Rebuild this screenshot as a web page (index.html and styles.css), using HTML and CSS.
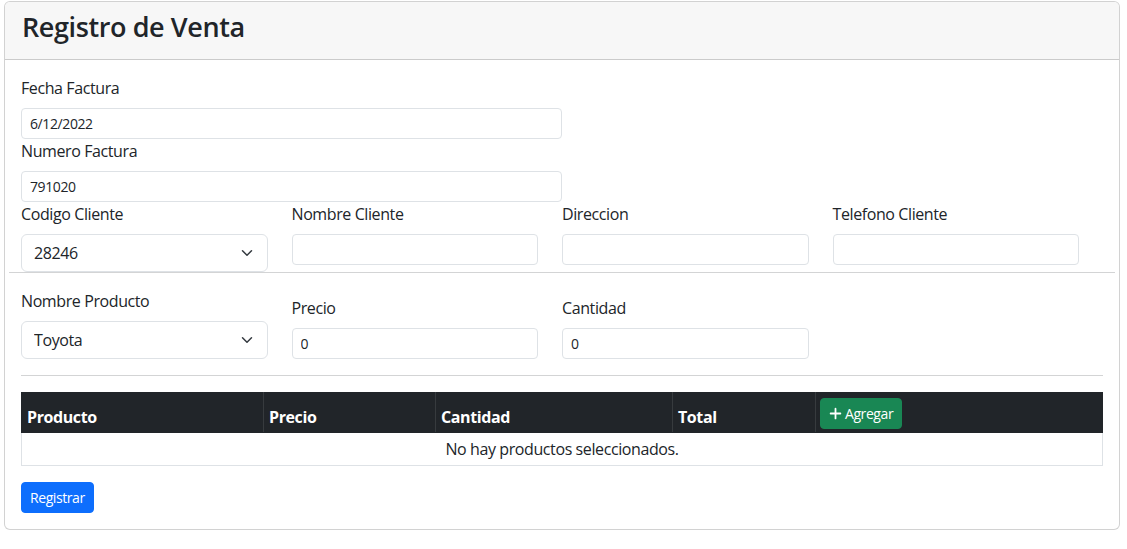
FILE: index.html
```html
<!DOCTYPE html>
<html lang="es">
<head>
<meta charset="utf-8">
<title>Registro de Venta</title>
<link rel="stylesheet" href="styles.css">
</head>
<body>
<div class="page">
  <div class="card">
    <div class="card-header">
      <h3 class="title">Registro de Venta</h3>
    </div>
    <div class="card-body">
      <div class="field half">
        <label class="label">Fecha Factura</label>
        <input class="input input-sm" type="text" value="6/12/2022">
      </div>
      <div class="field half">
        <label class="label">Numero Factura</label>
        <input class="input input-sm" type="text" value="791020">
      </div>

      <div class="grid">
        <div class="col">
          <label class="label">Codigo Cliente</label>
          <div class="select-wrap">
            <select class="select"><option>28246</option></select>
            <svg class="chevron" viewBox="0 0 16 16" width="16" height="12"><path d="m2 5 6 6 6-6" fill="none" stroke="#343a40" stroke-width="2" stroke-linecap="round" stroke-linejoin="round"/></svg>
          </div>
        </div>
        <div class="col">
          <label class="label">Nombre Cliente</label>
          <input class="input input-sm" type="text">
        </div>
        <div class="col">
          <label class="label">Direccion</label>
          <input class="input input-sm" type="text">
        </div>
        <div class="col">
          <label class="label">Telefono Cliente</label>
          <input class="input input-sm" type="text">
        </div>
      </div>
      <hr class="wide-rule">

      <div class="grid grid-end">
        <div class="col">
          <label class="label">Nombre Producto</label>
          <div class="select-wrap">
            <select class="select"><option>Toyota</option></select>
            <svg class="chevron" viewBox="0 0 16 16" width="16" height="12"><path d="m2 5 6 6 6-6" fill="none" stroke="#343a40" stroke-width="2" stroke-linecap="round" stroke-linejoin="round"/></svg>
          </div>
        </div>
        <div class="col">
          <label class="label">Precio</label>
          <input class="input input-sm" type="text" value="0">
        </div>
        <div class="col">
          <label class="label">Cantidad</label>
          <input class="input input-sm" type="text" value="0">
        </div>
      </div>

      <hr class="rule">

      <table class="table">
        <colgroup>
          <col class="w-prod"><col class="w-precio"><col class="w-cant"><col class="w-total"><col class="w-act">
        </colgroup>
        <thead>
          <tr>
            <th>Producto</th>
            <th>Precio</th>
            <th>Cantidad</th>
            <th>Total</th>
            <th class="th-action">
              <button class="btn btn-success" type="button">
                <svg class="plus" viewBox="0 0 16 16" width="13" height="13"><path d="M8 2v12M2 8h12" stroke="#fff" stroke-width="2.2" stroke-linecap="round"/></svg>Agregar
              </button>
            </th>
          </tr>
        </thead>
        <tbody>
          <tr>
            <td colspan="5" class="empty">No hay productos seleccionados.</td>
          </tr>
        </tbody>
      </table>

      <button class="btn btn-primary" type="button">Registrar</button>
    </div>
  </div>
</div>
</body>
</html>
```

FILE: styles.css
```css
* { box-sizing: border-box; }

html, body {
  margin: 0;
  background: #fff;
}

body {
  font-family: "Segoe UI", "Open Sans", sans-serif;
  font-size: 16px;
  line-height: 1.5;
  color: #212529;
  letter-spacing: -0.025em;
}

.page {
  padding: 1px 7px 0 4px;
}

.card {
  border: 1px solid rgba(0, 0, 0, 0.175);
  border-radius: 6px;
  background: #fff;
}

.card-header {
  padding: 8px 16px;
  background: #f7f7f7;
  border-bottom: 1px solid rgba(0, 0, 0, 0.175);
  border-radius: 5px 5px 0 0;
}

.title {
  margin: 0 0 8px;
  font-size: 27px;
  font-weight: 600;
  line-height: 33px;
  padding-left: 1px;
}

.card-body {
  padding: 16px;
}

.field.half {
  width: 50%;
}

.label {
  display: block;
  margin-bottom: 8px;
  font-size: 16px;
  line-height: 24px;
}

.input {
  display: block;
  width: 100%;
  font-family: inherit;
  letter-spacing: inherit;
  color: #212529;
  background: #fff;
  border: 1px solid #dee2e6;
  outline: none;
}

.input-sm {
  height: 31px;
  padding: 4px 8px;
  font-size: 14px;
  line-height: 21px;
  border-radius: 4px;
}

.grid {
  display: grid;
  grid-template-columns: repeat(4, 1fr);
  margin: 0 12px 0 -12px;
}

.grid-end {
  align-items: end;
}

.col {
  padding: 0 12px;
  min-width: 0;
}

.wide-rule {
  margin: 0 -12px 16px;
  border: 0;
  border-top: 1px solid #d3d4d5;
}

.rule {
  margin: 16px 0;
  border: 0;
  border-top: 1px solid #d3d4d5;
}

.select-wrap {
  position: relative;
}

.select {
  display: block;
  width: 100%;
  height: 38px;
  padding: 6px 36px 6px 12px;
  font-family: inherit;
  letter-spacing: inherit;
  font-size: 16px;
  line-height: 24px;
  color: #212529;
  background: #fff;
  border: 1px solid #dee2e6;
  border-radius: 6px;
  appearance: none;
  -webkit-appearance: none;
  outline: none;
}

.chevron {
  position: absolute;
  right: 13px;
  top: 13px;
  pointer-events: none;
}

.table {
  width: 100%;
  border-collapse: collapse;
  table-layout: fixed;
  margin-bottom: 16px;
}

.w-prod { width: 242px; }
.w-precio { width: 172px; }
.w-cant { width: 237px; }
.w-total { width: 143px; }
.w-act { width: auto; }

.table th {
  background: #212529;
  color: #fff;
  font-weight: 700;
  text-align: left;
  vertical-align: bottom;
  padding: 4px 5px 3px;
  line-height: 24px;
  height: 40px;
  border-top: 1px solid #212529;
  border-bottom: 1px solid #212529;
  border-left: 1px solid #373b3e;
  border-right: 1px solid #373b3e;
}

.table th:first-child {
  border-left-color: #212529;
}

.table th:last-child {
  border-right-color: #212529;
}

.table th.th-action {
  padding: 5px 4px 3px;
  vertical-align: top;
}

.table td {
  border: 1px solid #dee2e6;
  padding: 4px 5px;
  line-height: 24px;
}

.empty {
  text-align: center;
}

.btn {
  display: inline-flex;
  align-items: center;
  height: 31px;
  padding: 4px 8px;
  font-family: inherit;
  letter-spacing: -0.03em;
  font-size: 14px;
  line-height: 21px;
  color: #fff;
  border: 1px solid transparent;
  border-radius: 4px;
  cursor: pointer;
}

.btn-success {
  background: #198754;
  border-color: #198754;
  font-weight: 400;
}

.btn-primary {
  background: #0d6efd;
  border-color: #0d6efd;
}

.plus {
  margin-right: 3px;
}
```
